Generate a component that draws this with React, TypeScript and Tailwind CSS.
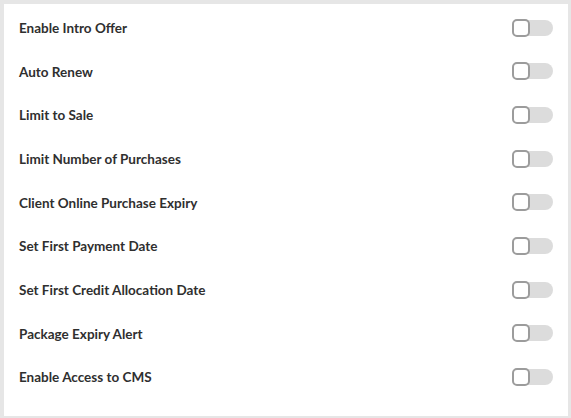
const items = [
  'Enable Intro Offer',
  'Auto Renew',
  'Limit to Sale',
  'Limit Number of Purchases',
  'Client Online Purchase Expiry',
  'Set First Payment Date',
  'Set First Credit Allocation Date',
  'Package Expiry Alert',
  'Enable Access to CMS',
];

function Toggle() {
  return (
    <div className="relative flex h-[18px] w-[41px] items-center">
      <div className="h-4 w-[41px] rounded-full bg-[#dcdcdc]" />
      <div className="absolute left-0 top-0 h-[18px] w-[18px] rounded-[5px] border-2 border-[#9c9c9c] bg-white" />
    </div>
  );
}

export default function App() {
  return (
    <div className="h-[418px] w-[571px] bg-[#e6e6e6] pl-1 pt-1">
      <div
        className="h-[412px] w-[564px] bg-white px-[15px] pt-[2px]"
        style={{ fontFamily: 'Lato, "Noto Sans", sans-serif' }}
      >
        {items.map((label) => (
          <div key={label} className="flex h-[43.625px] items-center justify-between">
            <span className="pt-[1px] text-[13.5px] font-bold text-[#2f2f2f]">{label}</span>
            <Toggle />
          </div>
        ))}
      </div>
    </div>
  );
}
